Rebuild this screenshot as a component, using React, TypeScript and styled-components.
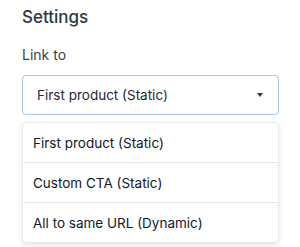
import React from "react";
import styled, { createGlobalStyle } from "styled-components";

const GlobalStyle = createGlobalStyle`
  body {
    margin: 0;
    background: #ffffff;
    font-family: "Inter", "Liberation Sans", sans-serif;
  }
`;

const Panel = styled.div`
  width: 300px;
  height: 247px;
  box-sizing: border-box;
  padding: 7px 21px 0 22px;
  display: flex;
  flex-direction: column;
`;

const Title = styled.h2`
  margin: 0;
  font-size: 17px;
  line-height: 20px;
  font-weight: 500;
  color: #2d3748;
`;

const Label = styled.label`
  margin-top: 19px;
  font-size: 14px;
  line-height: 18px;
  color: #374151;
`;

const SelectBox = styled.div`
  margin-top: 11px;
  height: 40px;
  box-sizing: border-box;
  border: 1px solid #a3c6f2;
  border-radius: 4px;
  padding: 0 15px 0 14px;
  display: flex;
  align-items: center;
  justify-content: space-between;
  font-size: 13.5px;
  color: #1f2937;
`;

const Caret = styled.span`
  width: 0;
  height: 0;
  border-left: 3.5px solid transparent;
  border-right: 3.5px solid transparent;
  border-top: 4px solid #2d3748;
`;

const Menu = styled.ul`
  margin: 7px 0 0;
  padding: 0;
  list-style: none;
  border: 1px solid #e8eaee;
  border-radius: 4px;
  box-shadow: 0 2px 5px rgba(30, 41, 59, 0.12);
  background: #ffffff;
`;

const Option = styled.li`
  height: 40px;
  box-sizing: border-box;
  display: flex;
  align-items: center;
  padding: 0 10px;
  font-size: 13.5px;
  color: #111827;
  border-top: 1px solid #e5e7eb;
  &:first-child {
    border-top: none;
    height: 39px;
  }
`;

const options = [
  "First product (Static)",
  "Custom CTA (Static)",
  "All to same URL (Dynamic)",
];

export default function App() {
  return (
    <>
      <GlobalStyle />
      <Panel>
        <Title>Settings</Title>
        <Label>Link to</Label>
        <SelectBox>
          <span>First product (Static)</span>
          <Caret />
        </SelectBox>
        <Menu>
          {options.map((o) => (
            <Option key={o}>{o}</Option>
          ))}
        </Menu>
      </Panel>
    </>
  );
}
